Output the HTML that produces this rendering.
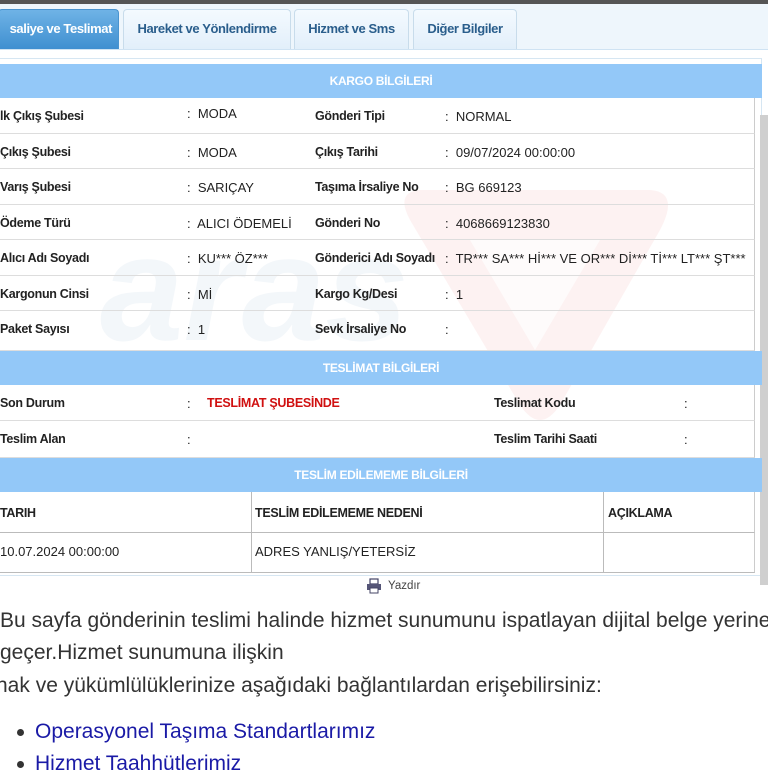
<!DOCTYPE html>
<html><head><meta charset="utf-8"><style>
*{margin:0;padding:0;box-sizing:border-box}
body{width:768px;height:768px;overflow:hidden;background:#fff;font-family:"Liberation Sans",sans-serif;position:relative;color:#222}
.a{position:absolute;white-space:nowrap}
.topline{left:0;top:0;width:768px;height:4px;background:#555}
.tabbar{left:0;top:4px;width:768px;height:46px;background:#eef6fc;border-bottom:1px solid #cfe3f3}
.tab{top:9px;height:40px;border:1px solid #c8dceb;border-bottom:none;border-radius:4px 4px 0 0;background:linear-gradient(#f4faff,#e2effa);color:#2a5e8c;font-weight:bold;font-size:13px;line-height:38px;text-align:center;letter-spacing:-0.4px}
.tab.act{background:linear-gradient(#6fb3e6,#3f8fd0);color:#fff;border-color:#4a94cf;text-align:right;padding-right:6px}
.hdr{left:0;width:762px;height:34px;background:#93c8f8;color:#fff;font-weight:bold;font-size:12px;text-align:center;line-height:34px;letter-spacing:-0.3px}
.row{left:0;width:755px;border-bottom:1px solid #ddd;border-right:1px solid #ccc;background:rgba(255,255,255,0.6)}
.l{font-weight:bold;font-size:12.5px;letter-spacing:-0.3px}
.v{font-size:13px}
.sb{left:760px;top:115px;width:8px;height:470px;background:#cfcfcf}
.p{font-size:21px;color:#333;left:0}
.link{color:#1a1aa6}
</style></head><body>
<div class="a topline"></div>
<div class="a tabbar"></div>
<div class="a tab act" style="left:-2px;width:121px">saliye ve Teslimat</div>
<div class="a tab" style="left:123px;width:168px">Hareket ve Yönlendirme</div>
<div class="a tab" style="left:294px;width:115px">Hizmet ve Sms</div>
<div class="a tab" style="left:413px;width:104px">Diğer Bilgiler</div>
<div class="a" style="left:0;top:58px;width:762px;height:518px;border:1px solid #d6e6f2;border-left:none"></div>
<div class="a sb"></div>

<svg class="a" style="left:90px;top:180px" width="600" height="260">
<text x="10" y="160" font-family="Liberation Sans" font-weight="bold" font-style="italic" font-size="150" fill="#c9d9e8" opacity="0.55">aras</text>
<path d="M330 10 L560 10 Q590 12 570 50 L470 225 Q450 255 430 225 L320 40 Q305 12 330 10 Z" fill="#f4c4c4" opacity="0.55"/>
<path d="M380 60 L510 60 L445 170 Z" fill="#fff" opacity="0.7"/>
</svg>

<div class="a hdr" style="top:64px">KARGO BİLGİLERİ</div>
<div class="a row" style="top:98px;height:36px"></div>
<div class="a row" style="top:134px;height:35px"></div>
<div class="a row" style="top:169px;height:36px"></div>
<div class="a row" style="top:205px;height:35px"></div>
<div class="a row" style="top:240px;height:36px"></div>
<div class="a row" style="top:276px;height:35px"></div>
<div class="a row" style="top:311px;height:40px"></div>

<div class="a l" style="left:0;top:109px">lk Çıkış Şubesi</div><div class="a v" style="left:187px;top:106px">:&nbsp; MODA</div>
<div class="a l" style="left:315px;top:109px">Gönderi Tipi</div><div class="a v" style="left:445px;top:109px">:&nbsp; NORMAL</div>
<div class="a l" style="left:0;top:145px">Çıkış Şubesi</div><div class="a v" style="left:187px;top:145px">:&nbsp; MODA</div>
<div class="a l" style="left:315px;top:145px">Çıkış Tarihi</div><div class="a v" style="left:445px;top:145px">:&nbsp; 09/07/2024 00:00:00</div>
<div class="a l" style="left:0;top:180px">Varış Şubesi</div><div class="a v" style="left:187px;top:180px">:&nbsp; SARIÇAY</div>
<div class="a l" style="left:315px;top:180px">Taşıma İrsaliye No</div><div class="a v" style="left:445px;top:180px">:&nbsp; BG 669123</div>
<div class="a l" style="left:0;top:216px">Ödeme Türü</div><div class="a v" style="left:187px;top:216px">:&nbsp; ALICI ÖDEMELİ</div>
<div class="a l" style="left:315px;top:216px">Gönderi No</div><div class="a v" style="left:445px;top:216px">:&nbsp; 4068669123830</div>
<div class="a l" style="left:0;top:251px">Alıcı Adı Soyadı</div><div class="a v" style="left:187px;top:251px">:&nbsp; KU*** ÖZ***</div>
<div class="a l" style="left:315px;top:251px">Gönderici Adı Soyadı</div><div class="a v" style="left:445px;top:251px">:&nbsp; TR*** SA*** Hİ*** VE OR*** Dİ*** Tİ*** LT*** ŞT***</div>
<div class="a l" style="left:0;top:287px">Kargonun Cinsi</div><div class="a v" style="left:187px;top:287px">:&nbsp; Mİ</div>
<div class="a l" style="left:315px;top:287px">Kargo Kg/Desi</div><div class="a v" style="left:445px;top:287px">:&nbsp; 1</div>
<div class="a l" style="left:0;top:322px">Paket Sayısı</div><div class="a v" style="left:187px;top:322px">:&nbsp; 1</div>
<div class="a l" style="left:315px;top:322px">Sevk İrsaliye No</div><div class="a v" style="left:445px;top:322px">:</div>

<div class="a hdr" style="top:351px">TESLİMAT BİLGİLERİ</div>
<div class="a row" style="top:385px;height:36px"></div>
<div class="a row" style="top:421px;height:37px"></div>
<div class="a l" style="left:0;top:396px">Son Durum</div><div class="a v" style="left:187px;top:396px">:</div>
<div class="a l" style="left:207px;top:396px;color:#d01010">TESLİMAT ŞUBESİNDE</div>
<div class="a l" style="left:494px;top:396px">Teslimat Kodu</div><div class="a v" style="left:684px;top:396px">:</div>
<div class="a l" style="left:0;top:432px">Teslim Alan</div><div class="a v" style="left:187px;top:432px">:</div>
<div class="a l" style="left:494px;top:432px">Teslim Tarihi Saati</div><div class="a v" style="left:684px;top:432px">:</div>

<div class="a hdr" style="top:458px">TESLİM EDİLEMEME BİLGİLERİ</div>
<div class="a row" style="top:492px;height:41px;border-bottom:1px solid #bbb"></div>
<div class="a row" style="top:533px;height:40px;border-bottom:1px solid #bbb"></div>
<div class="a" style="left:251px;top:492px;width:1px;height:81px;background:#bbb"></div>
<div class="a" style="left:603px;top:492px;width:1px;height:81px;background:#bbb"></div>
<div class="a l" style="left:0;top:506px">TARIH</div>
<div class="a l" style="left:255px;top:506px">TESLİM EDİLEMEME NEDENİ</div>
<div class="a l" style="left:608px;top:506px">AÇIKLAMA</div>
<div class="a v" style="left:0;top:544px">10.07.2024 00:00:00</div>
<div class="a v" style="left:255px;top:544px">ADRES YANLIŞ/YETERSİZ</div>

<svg class="a" style="left:366px;top:578px" width="16" height="16"><rect x="4" y="1" width="8" height="5" fill="none" stroke="#446" stroke-width="1.2"/><rect x="1" y="6" width="14" height="6" fill="#557"/><rect x="4" y="10" width="8" height="5" fill="#fff" stroke="#446"/></svg>
<div class="a" style="left:388px;top:580px;font-size:11.5px;color:#444">Yazdır</div>

<div class="a p" style="top:609px">Bu sayfa gönderinin teslimi halinde hizmet sunumunu ispatlayan dijital belge yerine</div>
<div class="a p" style="top:641px">geçer.Hizmet sunumuna ilişkin</div>
<div class="a p" style="top:674px;left:-4px">hak ve yükümlülüklerinize aşağıdaki bağlantılardan erişebilirsiniz:</div>
<div class="a" style="left:17px;top:729px;width:7px;height:7px;border-radius:50%;background:#333"></div>
<div class="a p link" style="left:35px;top:720px">Operasyonel Taşıma Standartlarımız</div>
<div class="a" style="left:17px;top:761px;width:7px;height:7px;border-radius:50%;background:#333"></div>
<div class="a p link" style="left:35px;top:752px">Hizmet Taahhütlerimiz</div>
</body></html>
